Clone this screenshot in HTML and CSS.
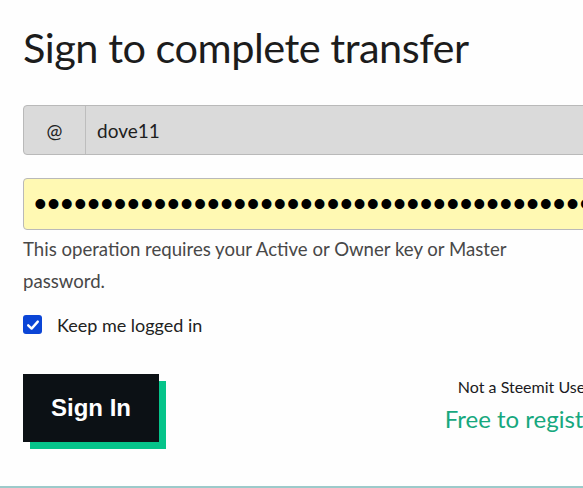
FILE: index.html
```html
<!DOCTYPE html>
<html lang="en">
<head>
<meta charset="utf-8">
<title>Sign to complete transfer</title>
<link rel="stylesheet" href="styles.css">
</head>
<body>
<main class="login">
  <h1 class="login__title">Sign to complete transfer</h1>
  <div class="input-group">
    <span class="input-group__addon">@</span>
    <span class="input-group__field">dove11</span>
  </div>
  <div class="password-field"><span class="password-field__dots">••••••••••••••••••••••••••••••••••••••••••••••••••••••</span></div>
  <p class="login__help">This operation requires your Active or Owner key or Master password.</p>
  <label class="keep-logged">
    <span class="keep-logged__box">
      <svg viewBox="0 0 18 18" width="18" height="18" aria-hidden="true"><path d="M4.2 9.3 L7.6 12.6 L13.8 5.6" fill="none" stroke="#fff" stroke-width="2.4" stroke-linecap="round" stroke-linejoin="round"/></svg>
    </span>
    <span class="keep-logged__text">Keep me logged in</span>
  </label>
  <div class="login__actions">
    <button class="btn-signin" type="button">Sign In</button>
    <div class="register">
      <div class="register__note">Not a Steemit User?</div>
      <a class="register__link" href="#">Free to register!</a>
    </div>
  </div>
  <div class="login__rule"></div>
</main>
</body>
</html>
```
FILE: styles.css
```css
html, body {
  margin: 0;
  padding: 0;
  overflow: hidden;
  background: #fefefe;
}
body {
  font-family: Lato, "Liberation Sans", sans-serif;
  color: #222;
}
.login {
  width: 760px;
  padding: 0 0 0 23px;
}
.login__title {
  margin: 20px 0 0;
  font-size: 41.5px;
  line-height: 54px;
  font-weight: 400;
  color: #1c1c1c;
  letter-spacing: -0.5px;
}
.input-group {
  margin-top: 31px;
  display: flex;
  height: 50px;
  box-sizing: border-box;
  border: 1px solid #b9b9b9;
  border-radius: 4px;
  background: #dadada;
  align-items: stretch;
}
.input-group__addon {
  width: 61px;
  border-right: 1px solid #bdbdbd;
  display: flex;
  align-items: center;
  justify-content: center;
  font-size: 19px;
  color: #222;
}
.input-group__field {
  display: flex;
  align-items: center;
  padding-left: 11px;
  font-size: 19px;
  color: #1e1e1e;
}
.password-field {
  margin-top: 23px;
  height: 52px;
  box-sizing: border-box;
  border: 1px solid #b9b9b9;
  border-radius: 4px;
  background: #fff9b3;
  display: flex;
  align-items: center;
  padding-left: 10px;
  overflow: hidden;
}
.password-field__dots {
  font-family: "Liberation Sans", sans-serif;
  font-size: 36px;
  line-height: 1;
  letter-spacing: 0.7px;
  color: #000;
  white-space: nowrap;
}
.login__help {
  margin: 3px 0 0;
  width: 520px;
  font-size: 18.6px;
  line-height: 32px;
  color: #484848;
}
.keep-logged {
  margin-top: 18px;
  display: flex;
  align-items: center;
  height: 19px;
}
.keep-logged__box {
  width: 19px;
  height: 19px;
  border-radius: 3px;
  background: #0b45d6;
  display: flex;
  align-items: center;
  justify-content: center;
}
.keep-logged__text {
  margin-left: 15px;
  font-size: 18px;
  color: #222;
}
.login__actions {
  margin-top: 40px;
  width: 605px;
  display: flex;
  justify-content: space-between;
  align-items: flex-start;
}
.btn-signin {
  width: 136px;
  height: 68px;
  border: 0;
  border-radius: 0;
  background: #0c1115;
  box-shadow: 7px 7px 0 #05c48a;
  color: #fff;
  font-family: "Liberation Sans", Arial, sans-serif;
  font-weight: 700;
  font-size: 24px;
  padding: 0;
}
.register {
  width: 200px;
  text-align: center;
  padding-top: 2px;
}
.register__note {
  font-size: 16px;
  line-height: 22px;
  color: #1a1a22;
}
.register__link {
  display: block;
  margin-top: 6px;
  font-size: 24px;
  line-height: 30px;
  color: #17a87e;
  text-decoration: none;
}
.login__rule {
  margin: 44px 0 0 -23px;
  height: 2px;
  background: #9ccaca;
}
```
